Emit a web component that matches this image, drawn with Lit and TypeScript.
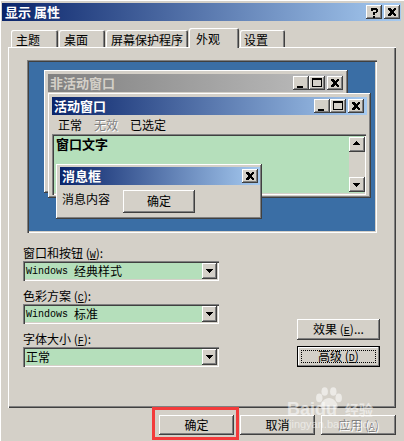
import { LitElement, html, css, svg } from "lit";
import { customElement } from "lit/decorators.js";

const glyphs: Record<string, unknown> = {
  min: svg`<path d="M4 10h6v2H4z" fill="#000"/>`,
  max: svg`<path d="M3 2h10v9H3zM4 4v6h8V4z" fill="#000" fill-rule="evenodd"/>`,
  close: svg`<path d="M4 3h2l2 2 2-2h2v1L9.500 7 12 10v1h-2L8 9l-2 2H4v-1l2.500-3L4 4z" fill="#000"/>`,
  help: svg`<path d="M5 3h6v1h1v3h-1v1H9v2H7V7h3V4.500H7V6H5V4h0zM7 11h2v2H7z" fill="#000"/>`,
  up: svg`<path d="M7.500 4l4 4h-8z" fill="#000"/>`,
  down: svg`<path d="M3.500 6h8l-4 4z" fill="#000"/>`,
};

const icon = (n: string) =>
  html`<svg class="ico" viewBox="0 0 16 14" width="16" height="14" shape-rendering="crispEdges">${glyphs[n]}</svg>`;

@customElement("app-root")
export class AppRoot extends LitElement {
  static styles = css`
    :host {
      display: block;
      position: relative;
      width: 404px;
      height: 441px;
      overflow: hidden;
      background: #d4d0c8;
      box-shadow: inset 1px 1px #fff;
      color: #000;
      font: 12px/14px "Noto Sans CJK SC", "DejaVu Sans", sans-serif;
    }
    .raised {
      background: #d4d0c8;
      box-shadow: inset -1px -1px #404040, inset 1px 1px #fff, inset -2px -2px #808080;
    }
    .sunken {
      box-shadow: inset 1px 1px #808080, inset 2px 2px #404040, inset -1px -1px #fff, inset -2px -2px #d4d0c8;
    }
    .titlebar {
      display: flex;
      align-items: center;
      justify-content: space-between;
      background: linear-gradient(90deg, #0a246a, #a6caf0);
      color: #fff;
      font-size: 13px;
      font-weight: 700;
      white-space: nowrap;
      height: 18px;
    }
    .titlebar.main {
      margin: 3px 0 0 2px;
      padding: 0 1px 0 3px;
      width: 399px;
      box-sizing: border-box;
    }
    .caps { display: flex; align-items: center; }
    .cap { display: block; width: 16px; height: 14px; }
    .gap { margin-left: 2px; }
    .ico { display: block; }

    .tabs {
      display: flex;
      align-items: flex-end;
      height: 26px;
      padding-left: 11px;
      position: relative;
      z-index: 1;
    }
    .tab {
      box-sizing: border-box;
      height: 17px;
      padding: 3px 0 0 5px;
      margin-right: 1px;
      background: #d4d0c8;
      border-radius: 2px 2px 0 0;
      box-shadow: inset 1px 1px #fff, inset -1px 0 #404040, inset -2px 0 #808080;
      white-space: nowrap;
    }
    .t1 { width: 47px; }
    .t2 { width: 46px; }
    .t3 { width: 82px; }
    .t4 { width: 50px; height: 20px; margin-bottom: -1px; padding: 4px 0 0 7px; }
    .t5 { width: 45px; padding-left: 4px; }
    .panel {
      box-sizing: border-box;
      margin-left: 8px;
      width: 388px;
      height: 361px;
      padding: 13px 19px 0;
      box-shadow: inset 1px 1px #fff, inset -1px -1px #404040, inset -2px -2px #808080;
    }
    .preview {
      position: relative;
      width: 350px;
      height: 173px;
      background: #3a6ea5;
    }
    .win { position: absolute; box-sizing: border-box; padding: 4px; }
    .win.inactive { left: 17px; top: 10px; width: 304px; height: 123px; padding-right: 5px; }
    .win.inactive .titlebar {
      background: linear-gradient(90deg, #808080, #c0c0c0);
      color: #d4d0c8;
      padding-left: 2px;
    }
    .win.active { left: 21px; top: 33px; width: 323px; height: 105px; }
    .win.active .titlebar { padding: 0 3px 0 2px; }
    .win.msg { left: 29px; top: 104px; width: 206px; height: 55px; padding: 3px 2px 0 4px; }
    .win.msg .titlebar { padding: 0 2px; }
    .menu { display: flex; gap: 12px; height: 19px; align-items: center; padding: 0 6px; }
    .disabled { color: #808080; text-shadow: 1px 1px #fff; }
    .textarea {
      box-sizing: border-box;
      display: flex;
      justify-content: space-between;
      height: 61px;
      margin-right: 1px;
      background: #b5dfbb;
      padding: 3px 1px 3px 4px;
      font-size: 13px;
      font-weight: 700;
    }
    .sb {
      display: flex;
      flex-direction: column;
      justify-content: space-between;
      width: 16px;
      background: #d4d0c8;
    }
    .sb .cap { height: 15px; }
    .msgbody { display: flex; align-items: flex-start; padding: 5px 2px; gap: 13px; }
    .msgbody span { margin-top: 2px; }
    .msgbtn { width: 72px; height: 23px; text-align: center; line-height: 22px; }

    .lower { display: flex; }
    .fields { flex: 0 0 196px; margin-left: -4px; padding-top: 12px; }
    .lbl { height: 16px; line-height: 16px; white-space: nowrap; }
    .lbl.next { margin-top: 7px; }
    .combo {
      box-sizing: border-box;
      position: relative;
      display: flex;
      align-items: center;
      height: 20px;
      margin-bottom: 6px;
      padding: 0 3px;
      background: #b5dfbb;
      white-space: pre;
    }
    .mono { font: 10px "Liberation Mono", monospace; }
    .drop { position: absolute; right: 2px; top: 2px; width: 15px; height: 16px; }
    .side {
      flex: none;
      display: flex;
      flex-direction: column;
      gap: 6px;
      margin-left: 78px;
      padding-top: 86px;
    }
    .btn {
      box-sizing: border-box;
      width: 83px;
      height: 21px;
      line-height: 20px;
      text-align: center;
      white-space: nowrap;
    }
    .btn.def {
      position: relative;
      box-shadow: inset 0 0 0 1px #000, inset -2px -2px #808080, inset 2px 2px #fff;
    }
    .btn.def::after {
      content: "";
      position: absolute;
      inset: 4px;
      border: 1px dotted #000;
    }
    .actions {
      display: flex;
      justify-content: flex-end;
      gap: 6px;
      margin: 7px 8px 0 0;
    }
    .actions .btn { width: 75px; height: 20px; line-height: 19px; }
    .red {
      position: absolute;
      left: 152px;
      top: 407px;
      width: 87px;
      height: 33px;
      box-sizing: border-box;
      border: 3px solid #f33b3b;
    }
    .wm {
      position: absolute;
      left: 287px;
      top: 386px;
      color: rgba(255, 255, 255, .55);
      pointer-events: none;
    }
    .wm svg { position: absolute; left: 28px; top: 1px; }
    .wm .bai { position: absolute; left: 0; top: 14px; font: 700 18px/18px "Liberation Sans", sans-serif; white-space: nowrap; }
    .wm .jy { position: absolute; left: 58px; top: 14px; font: 700 14px/18px "Noto Sans CJK SC", sans-serif; white-space: nowrap; }
    .wm .url { position: absolute; left: 2px; top: 32px; font: 11px/12px "Liberation Sans", sans-serif; white-space: nowrap; }
  `;

  private cap(n: string, gap = false) {
    return html`<span class="cap raised ${gap ? "gap" : ""}">${icon(n)}</span>`;
  }

  private combo(content: unknown) {
    return html`<div class="combo sunken">${content}<span class="drop raised">${icon("down")}</span></div>`;
  }

  render() {
    return html`
      <div class="titlebar main">
        <span>显示 属性</span>
        <span class="caps">${this.cap("help")}${this.cap("close", true)}</span>
      </div>
      <div class="tabs">
        <div class="tab t1">主题</div>
        <div class="tab t2">桌面</div>
        <div class="tab t3">屏幕保护程序</div>
        <div class="tab t4">外观</div>
        <div class="tab t5">设置</div>
      </div>
      <div class="panel">
        <div class="preview sunken">
          <div class="win inactive raised">
            <div class="titlebar">
              <span>非活动窗口</span>
              <span class="caps">${this.cap("min")}${this.cap("max")}${this.cap("close", true)}</span>
            </div>
          </div>
          <div class="win active raised">
            <div class="titlebar">
              <span>活动窗口</span>
              <span class="caps">${this.cap("min")}${this.cap("max")}${this.cap("close", true)}</span>
            </div>
            <div class="menu"><span>正常</span><span class="disabled">无效</span><span>已选定</span></div>
            <div class="textarea sunken">
              <span>窗口文字</span>
              <span class="sb">
                <span class="cap raised">${icon("up")}</span>
                <span class="cap raised">${icon("down")}</span>
              </span>
            </div>
          </div>
          <div class="win msg raised">
            <div class="titlebar">
              <span>消息框</span>
              <span class="caps">${this.cap("close")}</span>
            </div>
            <div class="msgbody">
              <span>消息内容</span>
              <div class="msgbtn raised">确定</div>
            </div>
          </div>
        </div>
        <div class="lower">
          <div class="fields">
            <div class="lbl">窗口和按钮 (<u class="mono">W</u>):</div>
            ${this.combo(html`<span class="mono">Windows </span><span>经典样式</span>`)}
            <div class="lbl next">色彩方案 (<u class="mono">C</u>):</div>
            ${this.combo(html`<span class="mono">Windows </span><span>标准</span>`)}
            <div class="lbl next">字体大小 (<u class="mono">F</u>):</div>
            ${this.combo(html`<span>正常</span>`)}
          </div>
          <div class="side">
            <div class="btn raised">效果 (<u class="mono">E</u>)...</div>
            <div class="btn def">高级 (<u class="mono">D</u>)</div>
          </div>
        </div>
      </div>
      <div class="actions">
        <div class="btn raised">确定</div>
        <div class="btn raised">取消</div>
        <div class="btn raised disabled">应用 (<u class="mono">A</u>)</div>
      </div>
      <div class="red"></div>
      <div class="wm">
        <svg width="28" height="24" viewBox="0 0 26 22" fill="currentColor">
          <ellipse cx="4" cy="10" rx="3" ry="4"/><ellipse cx="9" cy="4" rx="3" ry="4"/>
          <ellipse cx="17" cy="4" rx="3" ry="4"/><ellipse cx="22" cy="10" rx="3" ry="4"/>
          <path d="M13 10c-4 0-8 4-8 8 0 3 4 3 8 2 4 1 8 1 8-2 0-4-4-8-8-8z"/>
        </svg>
        <span class="bai">Baidu</span>
        <span class="jy">经验</span>
        <span class="url">jingyan.baidu.com</span>
      </div>
    `;
  }
}
